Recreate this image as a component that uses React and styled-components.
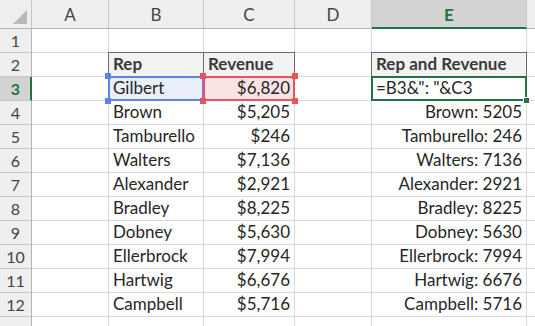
import React from "react";
import styled, { createGlobalStyle, css } from "styled-components";

const GlobalStyle = createGlobalStyle`
    html, body {
        margin: 0;
        padding: 0;
        background: #ffffff;
        overflow: hidden;
    }
    body {
        font-family: Lato, "Open Sans", "Liberation Sans", sans-serif;
    }
`;

const GREEN = "#217346";
const GRID = "#dadada";
const HEAD_LINE = "#c6c6c6";

const Sheet = styled.div`
    display: grid;
    grid-template-columns: 32px 77px 95px 91px 77px 155px 1fr;
    grid-template-rows: 29px repeat(13, 24px);
    width: 535px;
    height: 326px;
    overflow: hidden;
    color: #262626;
`;

const Corner = styled.div`
    background: #efefef;
    border-right: 1px solid ${HEAD_LINE};
    border-bottom: 1px solid #b4b4b4;
    display: flex;
    align-items: flex-end;
    justify-content: flex-end;
    padding: 0 4px 4px 0;
    box-sizing: border-box;
`;

const ColHeader = styled.div`
    background: ${(p) => (p.$active ? "#d3d3d3" : "#efefef")};
    border-right: 1px solid ${HEAD_LINE};
    border-bottom: ${(p) => (p.$active ? `2px solid ${GREEN}` : "1px solid #b4b4b4")};
    color: ${(p) => (p.$active ? GREEN : "#444444")};
    font-weight: ${(p) => (p.$active ? 700 : 400)};
    font-size: 17px;
    display: flex;
    align-items: center;
    justify-content: center;
    box-sizing: border-box;
    padding-top: 1px;
`;

const RowHeader = styled.div`
    background: ${(p) => (p.$active ? "#d3d3d3" : "#efefef")};
    border-right: ${(p) => (p.$active ? `2px solid ${GREEN}` : "1px solid #b4b4b4")};
    border-bottom: 1px solid ${HEAD_LINE};
    color: ${(p) => (p.$active ? GREEN : "#444444")};
    font-weight: ${(p) => (p.$active ? 700 : 400)};
    font-size: 16px;
    display: flex;
    align-items: center;
    justify-content: center;
    box-sizing: border-box;
    padding-left: ${(p) => (p.$active ? "1px" : "0")};
`;

const Cell = styled.div`
    position: relative;
    border-right: 1px solid ${GRID};
    border-bottom: 1px solid ${GRID};
    box-sizing: border-box;
    font-size: 17px;
    display: flex;
    align-items: flex-end;
    justify-content: ${(p) => (p.$right ? "flex-end" : "flex-start")};
    padding: 0 4px 2px 4px;
    white-space: nowrap;
    background: ${(p) => p.$fill || "transparent"};
    ${(p) =>
        p.$head &&
        css`
            background: #f2f2f2;
            font-weight: 700;
            color: #3a3a3a;
            border-top: 1px solid #6b6b6b;
            border-right: 1px solid #6b6b6b;
            margin-top: -1px;
        `}
    ${(p) =>
        p.$leftEdge &&
        css`
            border-left: 1px solid #6b6b6b;
            margin-left: -1px;
        `}
`;

const Selection = styled.div`
    position: absolute;
    left: -1px;
    top: -1px;
    right: -1px;
    bottom: -1px;
    border: ${(p) => p.$width}px solid ${(p) => p.$color};
    pointer-events: none;
    z-index: 2;
`;

const Handle = styled.span`
    position: absolute;
    width: 6px;
    height: 6px;
    background: ${(p) => p.$color};
    z-index: 3;
    ${(p) => (p.$top ? "top: -4px;" : "bottom: -4px;")}
    ${(p) => (p.$left ? "left: -4px;" : "right: -4px;")}
`;

const FillHandle = styled.span`
    position: absolute;
    width: 5px;
    height: 5px;
    right: -4px;
    bottom: -4px;
    background: ${GREEN};
    border: 1px solid #ffffff;
    z-index: 3;
`;

const CellText = styled.span`
    position: relative;
    z-index: 1;
`;

const reps = [
    ["Brown", 5205],
    ["Tamburello", 246],
    ["Walters", 7136],
    ["Alexander", 2921],
    ["Bradley", 8225],
    ["Dobney", 5630],
    ["Ellerbrock", 7994],
    ["Hartwig", 6676],
    ["Campbell", 5716],
];

const money = (n) => "$" + n.toLocaleString("en-US");

const BLUE = "#5b87e0";
const RED = "#e6545f";

const Corners = ({ color, sides }) =>
    sides.map(([top, left]) => <Handle key={`${top}${left}`} $color={color} $top={top} $left={left} />);

export default function App() {
    const cols = ["A", "B", "C", "D", "E", ""];

    return (
        <>
            <GlobalStyle />
            <Sheet>
                <Corner>
                    <svg width="14" height="14" viewBox="0 0 14 14">
                        <polygon points="14,0 14,14 0,14" fill="#b9b9b9" />
                    </svg>
                </Corner>
                {cols.map((c, i) => (
                    <ColHeader key={i} $active={c === "E"}>
                        {c}
                    </ColHeader>
                ))}

                {/* row 1 */}
                <RowHeader>1</RowHeader>
                <Cell />
                <Cell />
                <Cell />
                <Cell />
                <Cell />
                <Cell />

                {/* row 2 */}
                <RowHeader>2</RowHeader>
                <Cell />
                <Cell $head $leftEdge>
                    Rep
                </Cell>
                <Cell $head>Revenue</Cell>
                <Cell />
                <Cell $head $leftEdge>
                    Rep and Revenue
                </Cell>
                <Cell />

                {/* row 3 */}
                <RowHeader $active>3</RowHeader>
                <Cell />
                <Cell $fill="#e9eef9">
                    <Selection $color={BLUE} $width={2} />
                    <Corners color={BLUE} sides={[[true, true], [false, true]]} />
                    <CellText>Gilbert</CellText>
                </Cell>
                <Cell $right $fill="#fbe3e4">
                    <Selection $color={RED} $width={2} />
                    <Corners
                        color={RED}
                        sides={[
                            [true, true],
                            [false, true],
                            [true, false],
                            [false, false],
                        ]}
                    />
                    <CellText>{money(6820)}</CellText>
                </Cell>
                <Cell />
                <Cell>
                    <Selection $color={GREEN} $width={2} />
                    <FillHandle />
                    <CellText>=B3&amp;": "&amp;C3</CellText>
                </Cell>
                <Cell />

                {reps.map(([name, rev], i) => (
                    <React.Fragment key={name}>
                        <RowHeader>{i + 4}</RowHeader>
                        <Cell />
                        <Cell>{name}</Cell>
                        <Cell $right>{money(rev)}</Cell>
                        <Cell />
                        <Cell $right>{`${name}: ${rev}`}</Cell>
                        <Cell />
                    </React.Fragment>
                ))}

                <RowHeader />
                <Cell />
                <Cell />
                <Cell />
                <Cell />
                <Cell />
                <Cell />
            </Sheet>
        </>
    );
}
